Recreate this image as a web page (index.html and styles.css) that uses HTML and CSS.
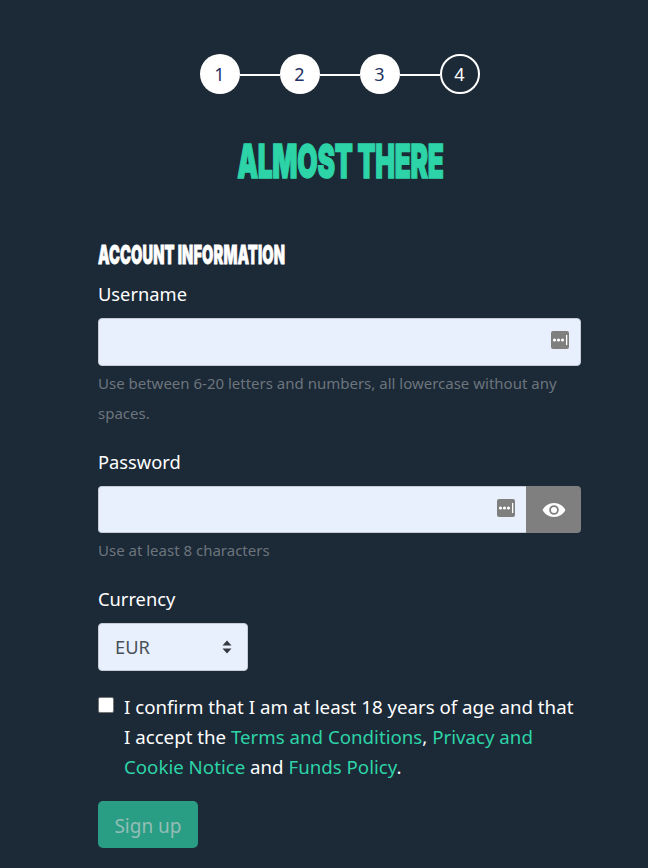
FILE: index.html
```html
<!DOCTYPE html>
<html>
<head>
  <title>Sign up</title>
  <meta charset="utf-8" />
  <link rel="stylesheet" href="styles.css">
</head>
<body>

<!--Steps-->
<div class="steps">
  <span class="step">1</span>
  <span class="step-line"></span>
  <span class="step">2</span>
  <span class="step-line"></span>
  <span class="step">3</span>
  <span class="step-line"></span>
  <span class="step current">4</span>
</div>

<h1 class="title"><span>ALMOST THERE</span></h1>

<form class="signup">
  <h2 class="section"><span>ACCOUNT INFORMATION</span></h2>

  <div class="field">
    <label class="field-label">Username</label>
    <div class="input-wrap">
      <div class="input">
        <svg class="key-icon" viewBox="0 0 18 18"><rect width="18" height="18" rx="2" fill="#7f7f7f"/><circle cx="3.500" cy="9" r="1.600" fill="#fff"/><circle cx="7.500" cy="9" r="1.600" fill="#fff"/><circle cx="11.500" cy="9" r="1.600" fill="#fff"/><rect x="15" y="4" width="1.300" height="10" fill="#fff"/></svg>
      </div>
    </div>
    <p class="hint">Use between 6-20 letters and numbers, all lowercase without any spaces.</p>
  </div>

  <div class="field">
    <label class="field-label">Password</label>
    <div class="input-wrap">
      <div class="input joined">
        <svg class="key-icon" viewBox="0 0 18 18"><rect width="18" height="18" rx="2" fill="#7f7f7f"/><circle cx="3.500" cy="9" r="1.600" fill="#fff"/><circle cx="7.500" cy="9" r="1.600" fill="#fff"/><circle cx="11.500" cy="9" r="1.600" fill="#fff"/><rect x="15" y="4" width="1.300" height="10" fill="#fff"/></svg>
      </div>
      <button type="button" class="eye">
        <svg viewBox="0 0 24 16" width="24" height="16"><path fill="#fff" fill-rule="evenodd" d="M12 1C6.800 1 2.600 4.200 .6 8c2 3.800 6.200 7 11.400 7s9.400-3.200 11.400-7C21.400 4.200 17.200 1 12 1zm0 2.200A4.800 4.800 0 1 1 12 12.800 4.800 4.800 0 0 1 12 3.200z"/><circle cx="12" cy="8" r="3" fill="#fff"/></svg>
      </button>
    </div>
    <p class="hint">Use at least 8 characters</p>
  </div>

  <div class="field">
    <label class="field-label">Currency</label>
    <div class="select">
      <span class="select-value">EUR</span>
      <svg viewBox="0 0 10 16" width="10" height="16"><path fill="#343a40" d="M5 1.500 9.500 6.500H.5zM5 14.500 .5 9.500H9.500z"/></svg>
    </div>
  </div>

  <div class="confirm">
    <span class="checkbox"></span>
    <p>I confirm that I am at least 18 years of age and that I accept the <a href="#">Terms and Conditions</a>, <a href="#">Privacy and Cookie Notice</a> and <a href="#">Funds Policy</a>.</p>
  </div>

  <button type="button" class="submit">Sign up</button>
</form>

</body>
</html>
```

FILE: styles.css
```css
body {
  margin: 0;
  background: #1c2937;
  color: #fff;
  font-family: 'Noto Sans', 'Open Sans', sans-serif;
  font-size: 18.300px;
  height: 868px;
  overflow: hidden;
}

.steps {
  display: flex;
  align-items: center;
  justify-content: center;
  margin-left: 32px;
  padding-top: 54px;
}
.step {
  width: 40px;
  height: 40px;
  box-sizing: border-box;
  border-radius: 50%;
  background: #fff;
  color: #1f3263;
  display: flex;
  align-items: center;
  justify-content: center;
  font-size: 18px;
  padding-right: 1px;
}
.step.current {
  background: transparent;
  border: 2px solid #fff;
  color: #fff;
}
.step-line {
  width: 40px;
  height: 2px;
  margin-top: 2px;
  background: #fff;
}

.title {
  margin: 42px 0 0 32px;
  text-align: center;
  font-family: 'Inter', 'Liberation Sans', sans-serif;
  font-size: 47px;
  line-height: 50px;
  font-weight: 900;
  letter-spacing: -0.500px;
  color: #2dd4a7;
  -webkit-text-stroke: 1.500px #2dd4a7;
}
.title span {
  display: inline-block;
  transform: scaleX(0.56);
}

.signup {
  margin: 54px 67px 0 98px;
}

.section {
  margin: 0;
  font-family: 'Inter', 'Liberation Sans', sans-serif;
  font-size: 26px;
  line-height: 30px;
  font-weight: 900;
  letter-spacing: 0.200px;
  white-space: nowrap;
  -webkit-text-stroke: 0.800px #fff;
}
.section span {
  display: inline-block;
  transform: scaleX(0.562);
  transform-origin: left;
}

.field {
  margin-bottom: 19px;
}
.field-label {
  display: block;
  line-height: 30px;
  margin: 9px 0 9px;
}

.input-wrap {
  display: flex;
}
.input {
  flex: 1;
  height: 48px;
  box-sizing: border-box;
  background: #e8f0fe;
  border: 1px solid #c5ccd6;
  border-radius: 4px;
  display: flex;
  align-items: center;
  justify-content: flex-end;
  padding-right: 11px;
}
.input.joined {
  height: 47px;
  border-radius: 4px 0 0 4px;
  border-right: 0;
}
.key-icon {
  width: 18px;
  height: 18px;
  margin-bottom: 4px;
}
.eye {
  width: 55px;
  height: 47px;
  border: 0;
  padding: 0;
  background: #7f7f7f;
  border-radius: 0 4px 4px 0;
  display: flex;
  align-items: center;
  justify-content: center;
}

.hint {
  margin: 2px 0 0;
  font-size: 15px;
  line-height: 30px;
  color: #6c757d;
}

.select {
  width: 150px;
  height: 48px;
  box-sizing: border-box;
  background: #e8f0fe;
  border: 1px solid #c5ccd6;
  border-radius: 4px;
  color: #495057;
  display: flex;
  align-items: center;
  justify-content: space-between;
  padding: 0 15px 0 16px;
}
.select-value {
  margin-bottom: 2px;
}

.confirm {
  display: flex;
  gap: 10px;
  margin-top: 21px;
}
.checkbox {
  flex: none;
  width: 16px;
  height: 16px;
  box-sizing: border-box;
  margin-top: 5px;
  background: #fff;
  border: 1px solid #767676;
  border-radius: 2px;
}
.confirm p {
  margin: 0;
  font-size: 18.700px;
  line-height: 30px;
}
.confirm a {
  color: #2dd4a7;
  text-decoration: none;
}

.submit {
  display: block;
  width: 100px;
  height: 47px;
  margin-top: 19px;
  padding: 2px 0 0;
  border: 0;
  border-radius: 5px;
  background: #2a9d85;
  color: #94bdb5;
  font-family: inherit;
  font-size: 19px;
}
```
